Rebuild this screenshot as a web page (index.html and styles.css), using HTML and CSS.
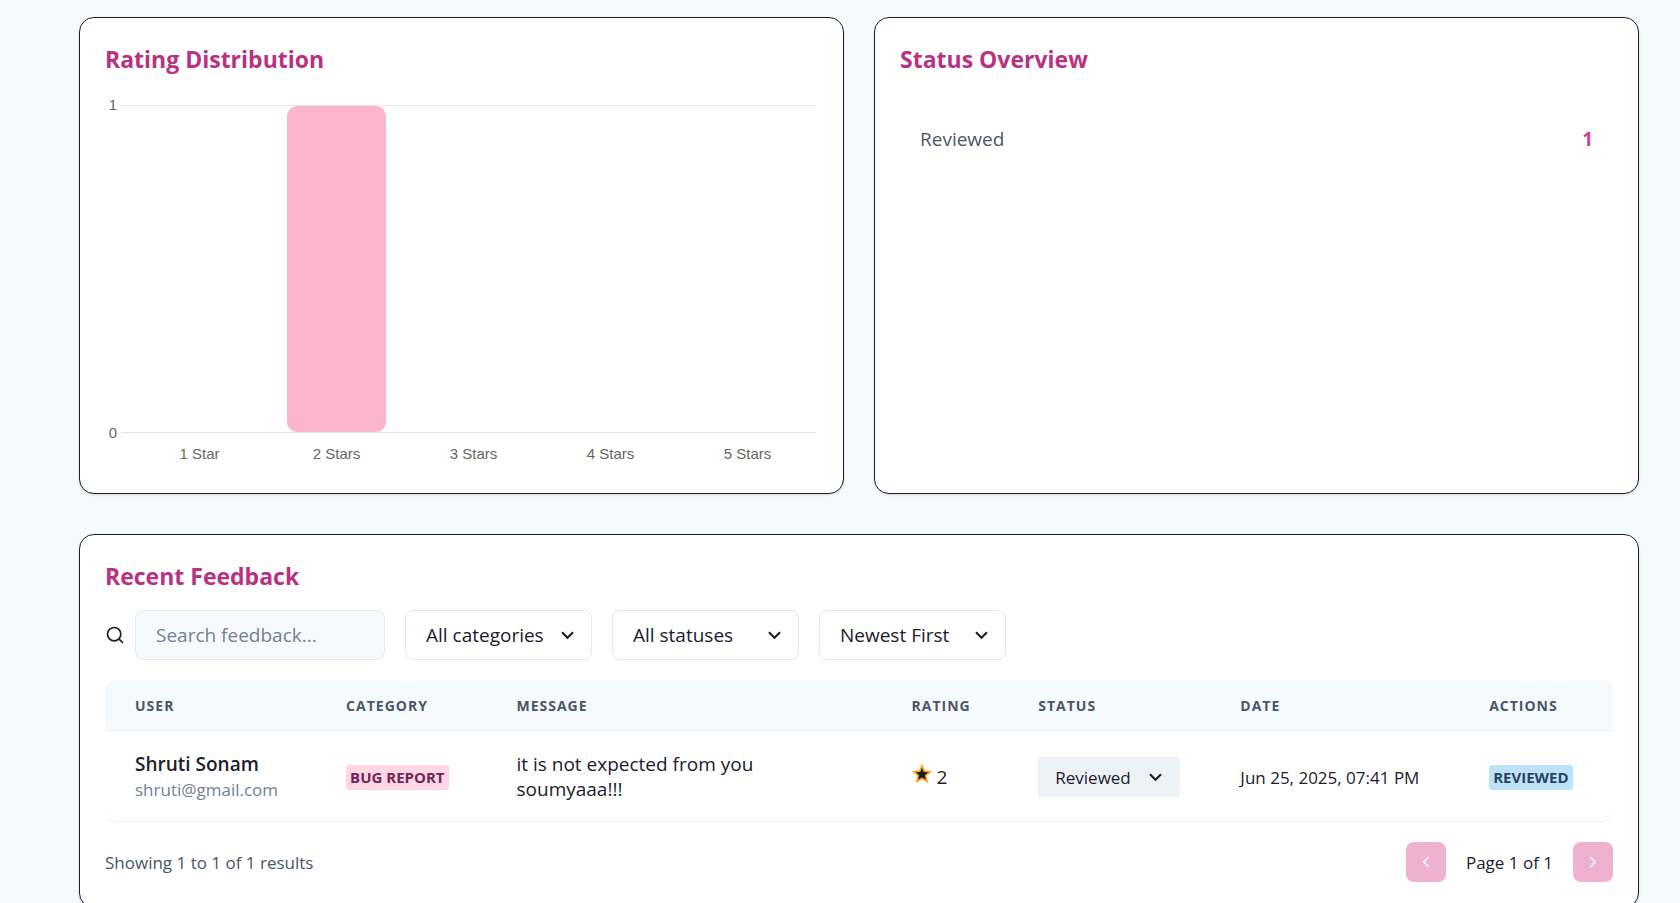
FILE: index.html
```html
<!DOCTYPE html>
<html lang="en">
<head>
<meta charset="utf-8">
<meta name="viewport" content="width=device-width, initial-scale=1">
<title>Feedback Dashboard</title>
<link rel="stylesheet" href="styles.css">
</head>
<body>
<main class="page">
  <div class="overview">
    <section class="card">
      <h2 class="card-title">Rating Distribution</h2>
      <div class="chart">
        <div class="y-axis"><span>1</span><span>0</span></div>
        <div class="plot">
          <div class="slot"></div>
          <div class="slot"><div class="bar" style="height: 100%"></div></div>
          <div class="slot"></div>
          <div class="slot"></div>
          <div class="slot"></div>
        </div>
        <div class="x-axis">
          <span>1 Star</span><span>2 Stars</span><span>3 Stars</span><span>4 Stars</span><span>5 Stars</span>
        </div>
      </div>
    </section>
    <section class="card">
      <h2 class="card-title">Status Overview</h2>
      <div class="status-row"><span>Reviewed</span><strong class="status-count">1</strong></div>
    </section>
  </div>

  <section class="card">
    <h2 class="card-title">Recent Feedback</h2>
    <form class="filters">
      <div class="search">
        <svg class="search-icon" viewBox="0 0 24 24" aria-hidden="true"><circle cx="11" cy="11" r="8"/><path d="M21 21l-4.35-4.35"/></svg>
        <input class="search-input" type="text" placeholder="Search feedback..." aria-label="Search feedback">
      </div>
      <div class="select">
        <select class="select-field" aria-label="Category"><option>All categories</option></select>
        <svg class="select-icon" viewBox="0 0 24 24" aria-hidden="true"><path d="M16.59 8.59L12 13.17 7.41 8.59 6 10l6 6 6-6z"/></svg>
      </div>
      <div class="select">
        <select class="select-field" aria-label="Status"><option>All statuses</option></select>
        <svg class="select-icon" viewBox="0 0 24 24" aria-hidden="true"><path d="M16.59 8.59L12 13.17 7.41 8.59 6 10l6 6 6-6z"/></svg>
      </div>
      <div class="select">
        <select class="select-field" aria-label="Sort order"><option>Newest First</option></select>
        <svg class="select-icon" viewBox="0 0 24 24" aria-hidden="true"><path d="M16.59 8.59L12 13.17 7.41 8.59 6 10l6 6 6-6z"/></svg>
      </div>
    </form>

    <table class="feedback">
      <thead>
        <tr>
          <th class="col-user">User</th>
          <th class="col-category">Category</th>
          <th class="col-message">Message</th>
          <th class="col-rating">Rating</th>
          <th class="col-status">Status</th>
          <th class="col-date">Date</th>
          <th class="col-actions">Actions</th>
        </tr>
      </thead>
      <tbody>
        <tr>
          <td><div class="user-name">Shruti Sonam</div><div class="user-email">shruti@gmail.com</div></td>
          <td><span class="badge badge-pink">Bug Report</span></td>
          <td><p class="message">it is not expected from you soumyaaa!!!</p></td>
          <td>
            <div class="rating">
              <svg class="star" viewBox="0 0 24 24" aria-hidden="true"><path d="M12 17.27L18.18 21l-1.64-7.03L22 9.24l-7.19-.61L12 2 9.19 8.63 2 9.24l5.46 4.73L5.82 21z"/></svg>
              <span>2</span>
            </div>
          </td>
          <td>
            <div class="select select-small">
              <select class="select-field" aria-label="Feedback status"><option>Reviewed</option></select>
              <svg class="select-icon" viewBox="0 0 24 24" aria-hidden="true"><path d="M16.59 8.59L12 13.17 7.41 8.59 6 10l6 6 6-6z"/></svg>
            </div>
          </td>
          <td class="date">Jun 25, 2025, 07:41 PM</td>
          <td><span class="badge badge-blue">Reviewed</span></td>
        </tr>
      </tbody>
    </table>

    <div class="footer">
      <p class="results">Showing 1 to 1 of 1 results</p>
      <nav class="pager" aria-label="Pagination">
        <button class="page-button" type="button" aria-label="Previous page" disabled><svg viewBox="0 0 24 24"><path d="M15 18l-6-6 6-6"/></svg></button>
        <span>Page 1 of 1</span>
        <button class="page-button" type="button" aria-label="Next page" disabled><svg viewBox="0 0 24 24"><path d="M9 18l6-6-6-6"/></svg></button>
      </nav>
    </div>
  </section>
</main>
</body>
</html>
```
FILE: styles.css
```css
* { box-sizing: border-box; }

body {
  margin: 0;
  background: #f7fafc;
  color: #1a202c;
  font-family: "Open Sans", "Noto Sans", sans-serif;
  font-size: 19px;
  line-height: 25px;
}

h2, p { margin: 0; }

.page {
  display: flex;
  flex-direction: column;
  gap: 40px;
  padding: 17px 41px 40px 79px;
}

.overview {
  display: grid;
  grid-template-columns: 1fr 1fr;
  gap: 30px;
}

.card {
  padding: 25px;
  background: #fff;
  border: 1px solid #1a202c;
  border-radius: 15px;
  box-shadow: 0 1px 3px rgba(0, 0, 0, 0.1), 0 1px 2px rgba(0, 0, 0, 0.06);
}

.card-title {
  color: #b83280;
  font-size: 23px;
  font-weight: 700;
  line-height: 32px;
}

/* Chart */
.chart {
  display: grid;
  grid-template-columns: 16px 1fr;
  grid-template-rows: 328px 35px;
  padding: 30px 2px 0 0;
  color: #666;
  font-family: "Liberation Sans", Arial, sans-serif;
  font-size: 15px;
  line-height: 16px;
}

.y-axis {
  display: flex;
  flex-direction: column;
  justify-content: space-between;
  align-items: center;
  margin: -8px 0;
}

.plot {
  display: grid;
  grid-template-columns: repeat(5, 1fr);
  padding-left: 10px;
  border: solid #e5e5e5;
  border-width: 1px 0;
}

.slot {
  display: flex;
  align-items: flex-end;
  justify-content: center;
}

.bar {
  width: 72%;
  background: #fbb6ce;
  border-radius: 10px;
}

.x-axis {
  grid-column: 2;
  display: grid;
  grid-template-columns: repeat(5, 1fr);
  padding: 13px 0 0 10px;
  text-align: center;
}

/* Status overview */
.status-row {
  display: flex;
  justify-content: space-between;
  padding: 52px 20px 0;
  color: #4a5568;
}

.status-count { color: #d53f8c; }

/* Filters */
.filters {
  display: flex;
  gap: 20px;
  padding: 18px 0 20px;
}

.search {
  display: flex;
  align-items: center;
  gap: 10px;
}

.search-icon {
  width: 20px;
  fill: none;
  stroke: currentColor;
  stroke-width: 2;
  stroke-linecap: round;
}

.search-input {
  width: 250px;
  height: 50px;
  padding: 0 20px;
  border: 1px solid #e2e8f0;
  border-radius: 8px;
  background: #f7fafc;
  color: inherit;
  font: inherit;
}

.search-input::placeholder { color: #718096; opacity: 1; }

.select {
  position: relative;
  width: 187px;
}

.select-field {
  width: 100%;
  height: 50px;
  padding: 0 40px 0 20px;
  appearance: none;
  border: 1px solid #e2e8f0;
  border-radius: 8px;
  background: #fff;
  color: inherit;
  font: inherit;
}

.select-icon {
  position: absolute;
  top: 50%;
  right: 12px;
  width: 25px;
  height: 25px;
  transform: translateY(-50%);
  fill: currentColor;
  pointer-events: none;
}

.select-small { width: 142px; font-size: 17px; }

.select-small .select-field {
  height: 40px;
  padding-left: 16px;
  border-color: #edf2f7;
  border-radius: 3px;
  background: #edf2f7;
}

/* Table */
.feedback {
  width: 100%;
  table-layout: fixed;
  border-collapse: separate;
  border-spacing: 0;
}

.feedback th {
  height: 51px;
  padding: 0 30px;
  background: #f7fafc;
  border-bottom: 1px solid #edf2f7;
  color: #4a5568;
  font-size: 14px;
  font-weight: 700;
  letter-spacing: 1px;
  text-align: left;
  text-transform: uppercase;
}

.feedback th:first-child { border-top-left-radius: 10px; }
.feedback th:last-child { border-top-right-radius: 10px; }

.feedback td {
  padding: 21px 0 19px 30px;
  border-bottom: 1px solid #edf2f7;
}

.feedback td:first-child { border-bottom-left-radius: 10px; }
.feedback td:last-child { border-bottom-right-radius: 10px; }

.col-user { width: 14%; }
.col-category { width: 11.3%; }
.col-message { width: 26.2%; }
.col-rating { width: 8.4%; }
.col-status { width: 13.4%; }
.col-date { width: 16.5%; }
.col-actions { width: 10.2%; }

.user-name { font-weight: 600; }
.user-email { color: #718096; font-size: 17px; }
.message { max-width: 250px; }
.feedback .date { font-size: 17px; }

.badge {
  display: inline-block;
  padding: 0 4px;
  border-radius: 3px;
  font-size: 15px;
  font-weight: 700;
  text-transform: uppercase;
}

.badge-pink { background: #fed7e2; color: #702459; }
.badge-blue { background: #bee3f8; color: #2a4365; }

.rating {
  display: flex;
  align-items: baseline;
  gap: 5px;
}

.star {
  width: 20px;
  height: 20px;
  fill: currentColor;
  stroke: #ffa51f;
  stroke-width: 2;
}

/* Footer */
.footer {
  display: flex;
  align-items: center;
  justify-content: space-between;
  padding-top: 20px;
  font-size: 17px;
}

.results { color: #4a5568; }

.pager {
  display: flex;
  align-items: center;
  gap: 20px;
}

.page-button {
  display: flex;
  align-items: center;
  justify-content: center;
  width: 40px;
  height: 40px;
  padding: 0;
  border: 0;
  border-radius: 8px;
  background: #d53f8c;
  color: #fff;
  opacity: 0.4;
}

.page-button svg {
  width: 18px;
  fill: none;
  stroke: currentColor;
  stroke-width: 2;
  stroke-linecap: round;
  stroke-linejoin: round;
}
```
